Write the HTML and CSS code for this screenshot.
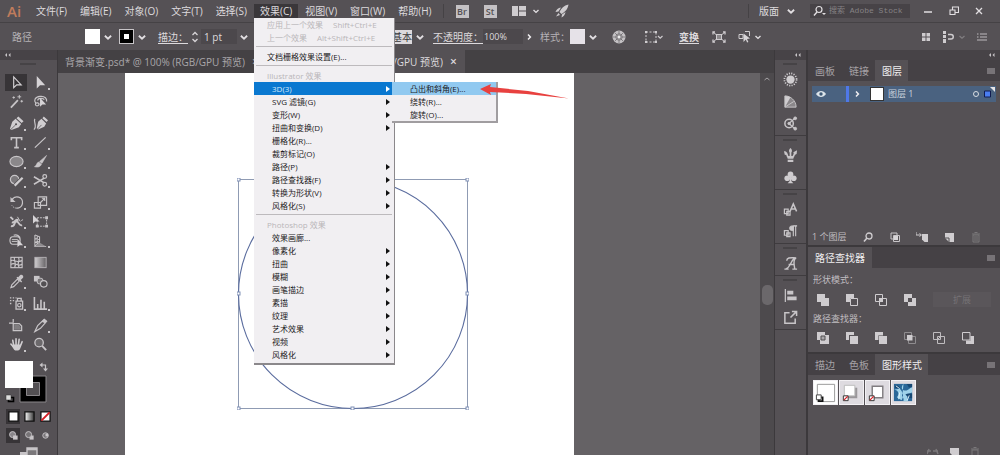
FILE: index.html
```html
<!DOCTYPE html>
<html lang="zh-CN">
<head>
<meta charset="utf-8">
<title>Illustrator</title>
<link rel="stylesheet" href="styles.css">
</head>
<body>
<svg class="defs" aria-hidden="true">
  <symbol id="chev" viewBox="0 0 8 8"><path d="M1.500 3l2.500 2.400L6.500 3" fill="none" stroke="#e2dfe2" stroke-width="1.400"/></symbol>
  <symbol id="chev-r" viewBox="0 0 8 8"><path d="M3 1.500L5.400 4 3 6.500" fill="none" stroke="#f0eef0" stroke-width="1.500"/></symbol>
  <symbol id="burger" viewBox="0 0 8 8"><path d="M0 2h8M0 4h8M0 6h8" stroke="#a9a6a9" stroke-width="1.200"/></symbol>
  <symbol id="dbl" viewBox="0 0 8 6"><path d="M3 1L1 3l2 2zM6.500 1l-2 2 2 2z" fill="#c8c5c8"/></symbol>
</svg>

<div class="app">
  <header class="menubar">
    <span class="logo">Ai</span>
    <nav class="menus">
      <button>文件(F)</button><button>编辑(E)</button><button>对象(O)</button><button>文字(T)</button><button>选择(S)</button>
      <div class="menu-host">
        <button class="open">效果(C)</button>
        <div class="dropdown" role="menu">
          <button class="head">应用上一个效果<kbd>Shift+Ctrl+E</kbd></button>
          <button class="head">上一个效果<kbd>Alt+Shift+Ctrl+E</kbd></button>
          <hr>
          <button class="flat">文档栅格效果设置(E)...</button>
          <hr>
          <button class="head">Illustrator 效果</button>
          <div class="sub-host">
            <button class="more active">3D(3)</button>
            <div class="submenu" role="menu">
              <button class="hot">凸出和斜角(E)...</button>
              <button>绕转(R)...</button>
              <button>旋转(O)...</button>
              <svg class="arrow" viewBox="0 0 90 16" aria-hidden="true"><path d="M0 5L11 0 10 3 48 7 89 14.500 46 10 10 8 11 11z" fill="#e8413f"/></svg>
            </div>
          </div>
          <button class="more">SVG 滤镜(G)</button>
          <button class="more">变形(W)</button>
          <button class="more">扭曲和变换(D)</button>
          <button>栅格化(R)...</button>
          <button>裁剪标记(O)</button>
          <button class="more">路径(P)</button>
          <button class="more">路径查找器(F)</button>
          <button class="more">转换为形状(V)</button>
          <button class="more">风格化(S)</button>
          <hr>
          <button class="head">Photoshop 效果</button>
          <button>效果画廊...</button>
          <button class="more">像素化</button>
          <button class="more">扭曲</button>
          <button class="more">模糊</button>
          <button class="more">画笔描边</button>
          <button class="more">素描</button>
          <button class="more">纹理</button>
          <button class="more">艺术效果</button>
          <button class="more">视频</button>
          <button class="more">风格化</button>
        </div>
      </div>
      <button>视图(V)</button><button>窗口(W)</button><button>帮助(H)</button>
    </nav>
    <div class="launch">
      <button class="badge">Br</button>
      <button class="badge">St</button>
      <button class="arrange" aria-label="排列文档"><svg width="14" height="10" viewBox="0 0 14 10"><path d="M0 0h6v10H0zM7 0h7v4.500H7zM7 5.500h7V10H7z" fill="#cfcccf"/></svg><svg width="8" height="8"><use href="#chev"/></svg></button>
      <button aria-label="GPU 性能"><svg width="14" height="14" viewBox="0 0 14 14" fill="#cfcccf"><path d="M13.500.5C9 1.500 6 4.500 4.500 8L6.500 10C10 8 13 5 13.500.5zM6 3.500C3 4 1.500 5.500.5 8l3-.5zM10.500 8C10 10.500 9 12.500 6.500 13.500l.5-3zM3.500 9L1 12.500 5 11z"/></svg></button>
    </div>
    <div class="winside">
      <button class="workspace">版面<svg width="10" height="10"><use href="#chev"/></svg></button>
      <label class="search"><svg width="14" height="12" viewBox="0 0 14 12"><circle cx="6" cy="4.500" r="3" fill="none" stroke="#e2dfe2" stroke-width="1.200"/><path d="M4 7L1 10.500" stroke="#e2dfe2" stroke-width="1.400"/><path d="M9 8h4l-2 2z" fill="#e2dfe2"/></svg><input type="text" aria-label="搜索" placeholder="搜索 Adobe Stock"></label>
      <div class="winbtns">
        <button aria-label="最小化"><svg width="10" height="10" viewBox="0 0 10 10"><path d="M1 6h8" stroke="#e2dfe2" stroke-width="1.500"/></svg></button>
        <button aria-label="还原"><svg width="10" height="10" viewBox="0 0 10 10" fill="none" stroke="#e2dfe2" stroke-width="1.100"><path d="M3.500 3.500V1h6v5.500H6.500M1 4h5v4.500H1z"/></svg></button>
        <button aria-label="关闭"><svg width="8" height="8" viewBox="0 0 8 8"><path d="M1 1l6 6M7 1L1 7" stroke="#e2dfe2" stroke-width="1.300"/></svg></button>
      </div>
    </div>
  </header>

  <div class="control">
    <span class="ctx">路径</span>
    <button class="sw" aria-label="填色"><i class="white"></i><svg width="10" height="10"><use href="#chev"/></svg></button>
    <button class="sw" aria-label="描边颜色"><i class="stroke"></i><svg width="10" height="10"><use href="#chev"/></svg></button>
    <label class="link" for="sw-w">描边：</label>
    <div class="field weight"><svg width="8" height="14" viewBox="0 0 8 14"><path d="M1.500 5L4 2.500 6.500 5M1.500 9L4 11.500 6.500 9" fill="none" stroke="#d8d5d8" stroke-width="1.300"/></svg><input id="sw-w" value="1 pt"><svg width="10" height="10"><use href="#chev"/></svg></div>
    <div class="brush"><select aria-label="画笔"><option>基本</option></select><svg width="10" height="10"><use href="#chev"/></svg></div>
    <label class="link" for="opa">不透明度：</label>
    <div class="field opacity"><input id="opa" value="100%"><svg width="8" height="8"><use href="#chev-r"/></svg></div>
    <span class="plain">样式：</span>
    <button class="sw" aria-label="样式"><i class="pale"></i><svg width="10" height="10"><use href="#chev"/></svg></button>
    <button class="wheel" aria-label="重新着色"><svg width="14" height="14" viewBox="0 0 14 14"><circle cx="7" cy="7" r="6.500" fill="#c4c1c4"/><g stroke="#5b575b"><path d="M7 1v12M1 7h12M2.800 2.800l8.400 8.400M11.200 2.800l-8.400 8.400" stroke-width=".6"/><circle cx="7" cy="7" r="3.200" fill="none" stroke-width=".6"/></g><circle cx="7" cy="7" r="1.200" fill="#eee"/></svg></button>
    <button aria-label="对齐" class="align"><svg width="20" height="14" viewBox="0 0 20 14"><rect x="2" y="2" width="10" height="10" fill="none" stroke="#cfcccf" stroke-dasharray="2 1.500"/><path d="M1 1h2v2H1zM11 1h2v2h-2zM1 11h2v2H1zM11 11h2v2h-2z" fill="#cfcccf"/><path d="M14 6l2.200 2.200L18.500 6" fill="none" stroke="#cfcccf" stroke-width="1.200"/></svg></button>
    <button class="link bold">变换</button>
    <button aria-label="隔离" class="iso"><svg width="14" height="12" viewBox="0 0 14 12" fill="none" stroke="#cfcccf"><rect x="4.500" y="3.500" width="5" height="5" fill="#8b888b"/><path d="M1 1l3 2.500M13 1l-3 2.500M1 11l3-2.500M13 11l-3-2.500"/><path d="M1 3.500V1h2M11 1h2v2.500M1 8.500V11h2M11 11h2V8.500" stroke-width="1.300"/></svg></button>
    <button aria-label="选择类似对象" class="similar"><svg width="13" height="13" viewBox="0 0 13 13"><path d="M1 4.500h4v4H1zM7 1.500h4.500V6" fill="none" stroke="#cfcccf"/><path d="M5.500 3.500l6.500 5-3 .4 1.400 3-1.300.6-1.300-3L5.500 12z" fill="#d8d5d8"/></svg><svg width="8" height="8"><use href="#chev"/></svg></button>
    <div class="ctl-right">
      <button aria-label="网格"><svg width="10" height="10" viewBox="0 0 10 10"><path d="M1 1h3.500v3.500H1zM5.500 1H9v3.500H5.500zM1 5.500h3.500V9H1zM5.500 5.500H9V9H5.500z" fill="#cfcccf"/></svg></button>
      <button aria-label="对齐像素"><svg width="24" height="12" viewBox="0 0 24 12"><path d="M1 0h3v3H1zM1 4h3v3H1zM1 8h3v4H1z" fill="#cfcccf"/><path d="M6 3.500h3a2 2 0 0 1 0 4.500H6" fill="none" stroke="#cfcccf" stroke-width="1.500"/><path d="M17.500 5l2.500 2.300L22.500 5" fill="none" stroke="#817e81" stroke-width="1.200"/></svg></button>
      <button aria-label="选项"><svg width="10" height="10" viewBox="0 0 10 10"><path d="M3 2h7M3 5h7M3 8h7M0 2h1.500M0 8h10M0 5h1.500" stroke="#bdbabd" stroke-width="1.100"/></svg></button>
    </div>
  </div>

  <main class="work">
    <aside class="tools">
      <div class="collapse left"><svg width="8" height="6"><use href="#dbl"/></svg></div>
      <div class="grip"></div>
      <div class="tg">
        <button class="on" aria-label="选择"><svg viewBox="0 0 16 16"><path d="M5 2v11.500l3.200-3H13z" fill="none" stroke="#d6d3d6" stroke-width="1.200"/></svg></button>
        <button class="m" aria-label="直接选择"><svg viewBox="0 0 16 16"><path d="M4 1v13.500L7.500 11H13z" fill="#d6d3d6"/></svg></button>
        <button aria-label="魔棒"><svg viewBox="0 0 16 16"><path d="M2 14.500L9.500 6.500" stroke="#c8c5c8" stroke-width="1.800"/><path d="M11 1v4M9 3h4M5 2.500v2.500M3.700 3.700h2.600M13.500 6.500V9M12.200 7.700H15" stroke="#c8c5c8"/></svg></button>
        <button aria-label="套索"><svg viewBox="0 0 16 16"><path d="M3 10C.5 7 2 3 7.500 2.500S15 5 14.500 8M3 10c-1 1.500 0 3 2 2.500s2-2.500 0-3-2 1-2 1M5 7c0-3 6-3 7-1" fill="none" stroke="#c8c5c8" stroke-width="1.300"/><path d="M7.500 4v9.500l2.500-2.300h4z" fill="#d6d3d6"/></svg></button>
      </div>
      <div class="tg">
        <button class="m" aria-label="钢笔"><svg viewBox="0 0 16 16"><path d="M10 .5L15.500 5.500 13.500 7.500 8 2.500zM7 3l6 5.500-2.500 3.500L2.500 15 1 13.500 3.500 6z" fill="#d0cdd0"/><path d="M2 14.300L7 9.500" stroke="#535053" stroke-width=".8"/><circle cx="7.500" cy="8.800" r="1.100" fill="#535053"/></svg></button>
        <button aria-label="曲率"><svg viewBox="0 0 16 16"><path d="M11.500.5L16 4.500l-1.500 2L10 2.500zM9 3l5 5-2 3.500L5.500 14.500l-1.500-1.500L5.500 6z" fill="#d0cdd0"/><path d="M5 13.800L9 9.500" stroke="#535053" stroke-width=".8"/><path d="M1 14.500C5 11 0 6 2 3" fill="none" stroke="#c8c5c8" stroke-width="1.300"/></svg></button>
        <button class="m" aria-label="文字"><svg viewBox="0 0 16 16"><path d="M2.500 5.500V3h11v2.500M8 3v10.500M5.500 13.500h5" fill="none" stroke="#c8c5c8" stroke-width="1.700"/></svg></button>
        <button class="m" aria-label="直线段"><svg viewBox="0 0 16 16"><path d="M2 13.500L13.500 2.500" stroke="#c8c5c8" stroke-width="1.300"/></svg></button>
        <button class="m" aria-label="椭圆"><svg viewBox="0 0 16 16"><ellipse cx="8" cy="8" rx="7" ry="5.500" fill="#8a878a" stroke="#c8c5c8" stroke-width="1.200"/></svg></button>
        <button class="m" aria-label="画笔工具"><svg viewBox="0 0 16 16"><path d="M14.500 1.500L9.500 10 7 8zM6.300 8.500l2.700 2.300C8 14 4.500 14.500 1.500 13.500 4 13 3.500 9 6.300 8.500z" fill="#c8c5c8" stroke="#c8c5c8" stroke-width=".6"/></svg></button>
        <button class="m" aria-label="Shaper"><svg viewBox="0 0 16 16"><circle cx="6" cy="7" r="4.500" fill="#7b787b" stroke="#c8c5c8" stroke-width="1.300"/><path d="M6 13.500L14.500 5" stroke="#535053" stroke-width="4"/><path d="M6 13.500L14.500 5" stroke="#d0cdd0" stroke-width="2.400"/></svg></button>
        <button class="m" aria-label="剪刀"><svg viewBox="0 0 16 16"><path d="M1 4l11 6.500M1 12l11-6.500" stroke="#c8c5c8" stroke-width="1.700"/><circle cx="12.500" cy="3.800" r="2" fill="none" stroke="#c8c5c8" stroke-width="1.300"/><circle cx="12.500" cy="12" r="2" fill="none" stroke="#c8c5c8" stroke-width="1.300"/></svg></button>
      </div>
      <div class="tg">
        <button class="m" aria-label="旋转"><svg viewBox="0 0 16 16"><path d="M3 5.500A6 6 0 1 1 8 14" fill="none" stroke="#c8c5c8" stroke-width="1.400"/><path d="M8 14A6 6 0 0 1 3 11" fill="none" stroke="#c8c5c8" stroke-dasharray="1.500 1"/><path d="M1.500 2v5.500H7z" fill="#c8c5c8"/></svg></button>
        <button class="m" aria-label="比例缩放"><svg viewBox="0 0 16 16" fill="none" stroke="#c8c5c8" stroke-width="1.200"><path d="M5.500 2h9v9h-9zM1.500 8h6.500v6H1.500z"/><path d="M8 8l4.500-4.500M9.500 3.500h3v3"/></svg></button>
        <button class="m" aria-label="宽度"><svg viewBox="0 0 16 16"><path d="M1.500 3l3 3M2 13c5 1 3-5 6-5s2 5 6 4M3 9c3 1 4-5 7-2" fill="none" stroke="#c8c5c8" stroke-width="2"/><path d="M9 3l3 5M13 7l2-1" stroke="#c8c5c8"/></svg></button>
        <button aria-label="自由变换"><svg viewBox="0 0 16 16"><rect x="4.500" y="4" width="10" height="9" fill="none" stroke="#c8c5c8" stroke-dasharray="2 1"/><path d="M13 2.500h3v3h-3zM13 11.500h3v3h-3zM3 11.500h3v3H3z" fill="#c8c5c8"/><path d="M0 1v9l2.500-2H7z" fill="#d6d3d6"/></svg></button>
        <button class="m" aria-label="形状生成器"><svg viewBox="0 0 16 16"><path d="M4 4h4.500C13 4 13 12 8.500 12H4C0 12 0 4 4 4zM5 2.500C8 1 12 3 12 7" fill="none" stroke="#c8c5c8" stroke-width="1.200"/><path d="M3 7h6M3 9h6" stroke="#c8c5c8"/><path d="M9 6v9l2.300-2H15z" fill="#d6d3d6"/></svg></button>
        <button class="m" aria-label="透视网格"><svg viewBox="0 0 16 16"><path d="M2 2v12.500h12M2 2l5 2v6l-5 4M2 6l5 1M2 10l5-1M4.500 3v9" fill="none" stroke="#c8c5c8" stroke-width="1.100"/><path d="M7 10l7 4.500H2z" fill="#8f8c8f"/></svg></button>
      </div>
      <div class="tg">
        <button aria-label="网格工具"><svg viewBox="0 0 16 16"><rect x="2" y="2.500" width="12" height="11" fill="none" stroke="#c8c5c8" stroke-width="1.200"/><path d="M2 6c4-2 4 3 12 0M2 10c5-3 6 3 12 0M6 2.500c-2 4 3 5 0 11M10 2.500c3 4-3 5 1 11" fill="none" stroke="#c8c5c8" stroke-width="1.200"/></svg></button>
        <button aria-label="渐变"><svg viewBox="0 0 16 16"><defs><linearGradient id="g1"><stop stop-color="#d0cdd0"/><stop offset="1" stop-color="#656265"/></linearGradient></defs><rect x="2" y="2.500" width="12" height="11" fill="url(#g1)" stroke="#b5b2b5"/></svg></button>
        <button class="m" aria-label="吸管"><svg viewBox="0 0 16 16"><path d="M2 14.500l1-3L9 5.500l2 2-6 6z" fill="none" stroke="#c8c5c8" stroke-width="1.200"/><path d="M8 4l5 5 1-1-1.500-1.500L15 4c1-2-1-4-3-3L9.800 3.500 9 3z" fill="#c8c5c8"/></svg></button>
        <button aria-label="混合"><svg viewBox="0 0 16 16"><path d="M1 2h6v6H1z" fill="#c8c5c8"/><rect x="4.500" y="4.500" width="6" height="6" rx="2" fill="#777477" stroke="#c8c5c8"/><circle cx="11.500" cy="10.500" r="3.500" fill="#535053" stroke="#c8c5c8" stroke-width="1.200"/></svg></button>
      </div>
      <div class="tg">
        <button class="m" aria-label="符号喷枪"><svg viewBox="0 0 16 16"><path d="M1 2h1.500M4 2h1.500M1 5h1.500M4 5h1.500M1 8h1.500M7 2h1" stroke="#c8c5c8" stroke-width="1.400"/><path d="M7.500 5.500h7v8.500h-7zM9 5.500V2.500h4v3" fill="none" stroke="#c8c5c8" stroke-width="1.400"/><circle cx="11" cy="9.800" r="1.800" fill="none" stroke="#c8c5c8" stroke-width="1.200"/></svg></button>
        <button class="m" aria-label="柱形图"><svg viewBox="0 0 16 16"><path d="M1.500 1v13H15M5 14V8.500M8.500 14V4M12 14V6" fill="none" stroke="#c8c5c8" stroke-width="1.700"/></svg></button>
      </div>
      <div class="tg">
        <button aria-label="画板工具"><svg viewBox="0 0 16 16"><path d="M0 5.500h4M4.500 1v4M4.500 6h6.500l2.500 2.500v5h-9z" fill="none" stroke="#c8c5c8" stroke-width="1.300"/><path d="M5.500 7h5l2 2.500v3h-7z" fill="#807d80"/></svg></button>
        <button class="m" aria-label="切片"><svg viewBox="0 0 16 16"><path d="M2 14.500L5 8l7-6.500 2.500 2L8 11z" fill="none" stroke="#c8c5c8" stroke-width="1.300"/><path d="M9 4l4 1.500L14.500 3 12 1z" fill="#c8c5c8"/></svg></button>
        <button class="m" aria-label="抓手"><svg viewBox="0 0 16 16"><path d="M5 9L4 3.500M7.500 8.500V1.800M10 8.500l.8-6M12 10l2-5M5 11L2 7.500" stroke="#d0cdd0" stroke-width="1.700" stroke-linecap="round"/><path d="M4.200 8h8.600c0 4-1.300 6.500-4.300 6.500S5 13 3.500 10z" fill="#d0cdd0"/></svg></button>
        <button aria-label="缩放"><svg viewBox="0 0 16 16"><circle cx="6.500" cy="6" r="4.500" fill="#6b686b" stroke="#c8c5c8" stroke-width="1.400"/><path d="M9.800 9.500L14 14" stroke="#c8c5c8" stroke-width="2"/></svg></button>
      </div>
      <div class="fillstroke">
        <svg width="46" height="42" viewBox="0 0 46 42"><path d="M15 15h26v26H15z" fill="#000" stroke="#8a878a"/><path d="M21.500 21.500h13v13h-13z" fill="#535053" stroke="#8a878a"/><path d="M0 0h28v27H0z" fill="#fff"/><path d="M37 4h3.500v5" fill="none" stroke="#c8c5c8" stroke-width="1.200"/><path d="M37.500 1.500v5L34.500 4zM38 7.500h5L40.500 10.500z" fill="#c8c5c8"/><path d="M3.500 36.500h5v4h-5z" fill="none" stroke="#000" stroke-width="1.600"/><path d="M1 34h5v5H1z" fill="#ddd" stroke="#333" stroke-width=".5"/></svg>
      </div>
      <div class="modes">
        <button class="on" aria-label="颜色"><svg viewBox="0 0 12 12"><path d="M1 1h10v10H1z" fill="#fff" stroke="#111" stroke-width="1.400"/></svg></button>
        <button aria-label="渐变填色"><svg viewBox="0 0 12 12"><defs><linearGradient id="g2"><stop stop-color="#fff"/><stop offset="1" stop-color="#333"/></linearGradient></defs><path d="M1 1h10v10H1z" fill="url(#g2)" stroke="#111" stroke-width="1.400"/></svg></button>
        <button aria-label="无"><svg viewBox="0 0 12 12"><path d="M1 1h10v10H1z" fill="#fff" stroke="#111" stroke-width="1.400"/><path d="M1.500 10.500l9-9" stroke="#d41f26" stroke-width="2.200"/></svg></button>
      </div>
      <div class="modes">
        <button class="on" aria-label="正常绘图"><svg viewBox="0 0 12 12"><circle cx="5" cy="5" r="3.300" fill="#89868a" stroke="#c8c5c8"/><path d="M5.500 6h5v4.500h-5z" fill="#c8c5c8"/></svg></button>
        <button aria-label="背面绘图"><svg viewBox="0 0 12 12"><path d="M6 6h4.500v4.500H6z" fill="#c8c5c8"/><circle cx="5" cy="5" r="3.300" fill="#777477" stroke="#c8c5c8"/></svg></button>
        <button aria-label="内部绘图"><svg viewBox="0 0 12 12"><circle cx="6" cy="6" r="3" fill="#777477" stroke="#c8c5c8"/><path d="M6 4h3v3H6z" fill="#c8c5c8"/></svg></button>
      </div>
      <button class="screen" aria-label="屏幕模式"><svg width="18" height="12" viewBox="0 0 18 12"><path d="M7 1h10v10H7zM7 2.500h10" fill="#7b787b" stroke="#c8c5c8" stroke-width="1.400"/><path d="M0 5h7v6H0z" fill="#c8c5c8"/></svg></button>
    </aside>

    <section class="doc">
      <div class="tabs">
        <button class="tab">背景渐变.psd* @ 100% (RGB/GPU 预览)<b>×</b></button>
        <button class="tab current">(RGB/GPU 预览)<b>×</b></button>
      </div>
      <div class="canvas">
        <div class="artboard">
          <svg class="shape" width="232" height="232" viewBox="0 0 232 232" fill="none">
            <rect x="1.500" y="1.500" width="229" height="229" stroke="#8f9bb3"/>
            <circle cx="116" cy="116" r="114.500" stroke="#5a6c9e" stroke-width="1.100"/>
            <g fill="#fff" stroke="#7f8fb5"><rect x="0" y="0" width="3" height="3"/><rect x="229" y="0" width="3" height="3"/><rect x="0" y="229" width="3" height="3"/><rect x="229" y="229" width="3" height="3"/><rect x="0" y="114" width="3" height="3"/><rect x="229" y="114" width="3" height="3"/><rect x="114" y="229" width="3" height="3"/></g>
          </svg>
        </div>
        <div class="scroll"><svg width="8" height="8" viewBox="0 0 8 8"><path d="M1.500 5L4 3l2.500 2" fill="none" stroke="#a5a2a5"/></svg><i></i></div>
      </div>
    </section>

    <aside class="strip">
      <div class="collapse"><svg width="8" height="6"><use href="#dbl"/></svg></div>
      <div class="sg">
        <button aria-label="颜色面板"><svg viewBox="0 0 16 16"><circle cx="8" cy="8" r="4.400" fill="#d0cdd0"/><circle cx="8" cy="8" r="6.500" fill="none" stroke="#d0cdd0" stroke-width="1.800" stroke-dasharray="1.200 1.352"/></svg></button>
        <button aria-label="颜色参考"><svg viewBox="0 0 16 16"><path d="M2 2c6 0 12 5 12 12H2z" fill="#8a878a"/><path d="M2 2v12L8 3.500C6 2.500 4 2 2 2z" fill="#d0cdd0"/><path d="M2 2c6 0 12 5 12 12H2zM2 14l9.500-6" fill="none" stroke="#c8c5c8"/></svg></button>
        <button aria-label="颜色主题"><svg viewBox="0 0 16 16" fill="none" stroke="#c8c5c8"><circle cx="6.500" cy="8" r="4.500" stroke-width="1.600"/><path d="M6.500 8l6.500-6M6.500 8l6.500 6" stroke-width="1.300"/><g fill="#c8c5c8"><circle cx="6.500" cy="8" r="1.300"/><circle cx="13" cy="2.500" r="1.500"/><circle cx="13" cy="13.500" r="1.500"/></g></svg></button>
      </div>
      <div class="sg">
        <button aria-label="画笔面板"><svg viewBox="0 0 16 16"><path d="M5 9L3.500 5M8 9V3M11 9l2-4" stroke="#c8c5c8" stroke-width="1.800"/><path d="M1 3.500c2.500-.5 3.500 1 3.500 3.500l-2.500.5zM8 0c2.300 2 1.800 4.500 0 5-1.800-.5-2.300-3 0-5zM15 2.500l-4 2 1 3 2.500-1zM4 8.500h8l-1 3H5zM5 12.500h6V15H5z" fill="#c8c5c8"/></svg></button>
        <button aria-label="符号"><svg viewBox="0 0 16 16" fill="#d0cdd0"><circle cx="8" cy="4.500" r="3"/><circle cx="4.500" cy="8.800" r="3"/><circle cx="11.500" cy="8.800" r="3"/><path d="M7.300 6h1.400L9 12l2 2H5l2-2z"/></svg></button>
      </div>
      <div class="sg">
        <button aria-label="字符样式"><svg viewBox="0 0 16 16" fill="none" stroke="#c8c5c8"><path d="M7.500 10L11 2l3.500 8M8.500 7.500h5" stroke-width="1.600"/><path d="M1.500 7.500h4v5h-4zM4 10h3.500v4H4z" stroke-width="1.300"/></svg></button>
        <button aria-label="段落样式"><svg viewBox="0 0 16 16" fill="none" stroke="#c8c5c8"><path d="M15 2H9.500a2.500 2.500 0 0 0 0 5H11V2z" fill="#c8c5c8"/><path d="M11 2v11M13.500 2v11" stroke-width="1.200"/><path d="M1.500 7h4v5h-4zM4 9.500h3.500v4H4z" stroke-width="1.300"/></svg></button>
      </div>
      <div class="sg">
        <button aria-label="字形"><svg viewBox="0 0 16 16" fill="none" stroke="#c8c5c8"><path d="M4 5C4 1 9 2 14 2c-4 2-2 7-1.500 11.500M12 2.500C8 6 7 13.500 3 13.500M6 9h6.500M1.500 14H6M10 14h5" stroke-width="1.500"/></svg></button>
      </div>
      <div class="sg">
        <button aria-label="对齐面板"><svg viewBox="0 0 16 16"><path d="M2.500 1v14" stroke="#c8c5c8" stroke-width="1.300"/><path d="M4.500 3H11v4H4.500zM4.500 9h10v4h-10z" fill="#c8c5c8"/></svg></button>
        <button aria-label="资源导出"><svg viewBox="0 0 16 16" fill="none" stroke="#c8c5c8" stroke-width="1.600"><path d="M7 3H2v11h11V9"/><path d="M8 8l6-6M9.500 1.500h5v5"/></svg></button>
      </div>
    </aside>

    <aside class="panels">
      <div class="collapse"><svg width="8" height="6"><use href="#dbl"/></svg></div>
      <section class="panel">
        <div class="ptabs"><button>画板</button><button>链接</button><button class="sel">图层</button><svg width="8" height="8"><use href="#burger"/></svg></div>
        <div class="pbody layers">
          <div class="layer">
            <button class="eye" aria-label="切换可视性"><svg width="10" height="8" viewBox="0 0 10 8"><path d="M0 4c2.500-4 7.500-4 10 0-2.500 4-7.500 4-10 0z" fill="#dce4ea"/><circle cx="5" cy="4" r="1.700" fill="#3f5a77"/></svg></button>
            <i class="tint"></i>
            <button aria-label="展开" class="exp"><svg width="8" height="8"><use href="#chev-r"/></svg></button>
            <i class="thumb"></i>
            <span>图层 1</span>
            <svg class="target" width="26" height="16" viewBox="0 0 26 16"><circle cx="6" cy="8" r="2.500" fill="none" stroke="#d8dde2"/><path d="M14.500 5h6v6h-6z" fill="#4a7df0" stroke="#101c50"/><path d="M20 1h5v5z" fill="#e8e6e8"/></svg>
          </div>
          <div class="lfoot">
            <span>1 个图层</span>
            <button aria-label="定位对象"><svg viewBox="0 0 12 12"><circle cx="7" cy="5" r="3" fill="none" stroke="#d0cdd0" stroke-width="1.300"/><path d="M5 7L2 10.500" stroke="#d0cdd0" stroke-width="1.600"/></svg></button>
            <button aria-label="剪切蒙版"><svg viewBox="0 0 12 12"><path d="M2 2h6v6H2zM4.500 4.500h6v6h-6z" fill="none" stroke="#c8c5c8"/><path d="M5 5h4v4H5z" fill="#d8d5d8"/></svg></button>
            <button aria-label="新建子图层"><svg viewBox="0 0 12 12"><path d="M0 1v3h5M3.500 2.500L5.500 4 3.500 5.500" fill="none" stroke="#d0cdd0"/><path d="M6 3h6v8H8.500L6 8.500z" fill="#d0cdd0"/></svg></button>
            <button aria-label="新建图层"><svg viewBox="0 0 12 12"><path d="M2 2h9v9H6L2 7z" fill="#d0cdd0"/><path d="M2 7h4v4" fill="none" stroke="#535053"/></svg></button>
            <button aria-label="删除" class="dim"><svg viewBox="0 0 12 12"><path d="M2 3h8M4.500 1.500h3M3 4h6v7H3zM5 5v5M7 5v5" fill="none" stroke="#7b787b"/></svg></button>
          </div>
        </div>
      </section>
      <section class="panel">
        <div class="ptabs"><button class="sel">路径查找器</button><svg width="8" height="8"><use href="#burger"/></svg></div>
        <div class="pbody finder">
          <span>形状模式：</span>
          <div class="prow">
            <button aria-label="联集"><svg viewBox="0 0 12 12"><path d="M0 0h8v4h4v8H4V8H0z" fill="#cfcccf"/></svg></button>
            <button aria-label="减去顶层"><svg viewBox="0 0 12 12"><path d="M0 0h8v4H4v4H0z" fill="#cfcccf"/><path d="M4.500 4.500h7v7h-7z" fill="none" stroke="#cfcccf"/></svg></button>
            <button aria-label="交集"><svg viewBox="0 0 12 12"><path d="M.5.5h7v7h-7zM4.500 4.500h7v7h-7z" fill="none" stroke="#cfcccf"/><path d="M4 4h4v4H4z" fill="#cfcccf"/></svg></button>
            <button aria-label="差集"><svg viewBox="0 0 12 12"><path d="M0 0h8v4h4v8H4V8H0zM4 4v4h4V4z" fill="#cfcccf" fill-rule="evenodd"/></svg></button>
            <button class="expand" disabled>扩展</button>
          </div>
          <span>路径查找器：</span>
          <div class="prow">
            <button aria-label="分割"><svg viewBox="0 0 12 12"><path d="M0 0h8v3h4v9H3V8H0z" fill="#cfcccf"/><path d="M4 8V4h4v4z" fill="#a9a6a9" stroke="#535053"/></svg></button>
            <button aria-label="修边"><svg viewBox="0 0 12 12"><path d="M0 0h8v3H3v5H0zM4 4h8v8H4z" fill="#cfcccf"/></svg></button>
            <button aria-label="合并"><svg viewBox="0 0 12 12"><path d="M0 0h8v4h4v8H4V8H0z" fill="#cfcccf"/><path d="M3.500 8V3.500H8" fill="none" stroke="#8a878a"/></svg></button>
            <button aria-label="裁剪"><svg viewBox="0 0 12 12"><path d="M.5.500h7v7h-7zM4.500 4.500h7v7h-7z" fill="none" stroke="#8f8c8f"/><path d="M3 3h5.500v5.500H3z" fill="#cfcccf"/></svg></button>
            <button aria-label="轮廓"><svg viewBox="0 0 12 12"><path d="M.5.500h7v7h-7zM4.500 4.500h7v7h-7zM4 8l4-4" fill="none" stroke="#bfbcbf"/></svg></button>
            <button aria-label="减去后方对象"><svg viewBox="0 0 12 12"><path d="M.5.500h7.500v7.500H.500z" fill="none" stroke="#cfcccf"/><path d="M8.500 4H12v8H4V8.500h4.500z" fill="#cfcccf"/></svg></button>
          </div>
        </div>
      </section>
      <section class="panel grow">
        <div class="ptabs"><button>描边</button><button>色板</button><button class="sel">图形样式</button><svg width="8" height="8"><use href="#burger"/></svg></div>
        <div class="pbody styles">
          <div class="swatches">
            <button class="first" aria-label="默认样式"><svg viewBox="0 0 24 24"><path d="M3.500 3.500h18v18h-18z" fill="#fff" stroke="#999"/><path d="M5 17h4v4H5z" fill="none" stroke="#111" stroke-width="1.800"/><path d="M2.500 14.500h5v5h-5z" fill="#fff" stroke="#444"/></svg></button>
            <button aria-label="投影"><svg viewBox="0 0 24 24"><path d="M7 7h11v11H7z" fill="#9a979a"/><path d="M4.500 4.500h11v11h-11z" fill="#fff" stroke="#bbb"/><path d="M3.500 15.500h5v5h-5z" fill="#fff" stroke="#333"/><path d="M4 20l4-4" stroke="#d41f26" stroke-width="1.300"/></svg></button>
            <button aria-label="圆角"><svg viewBox="0 0 24 24"><path d="M6.500 5.500h11v12h-11z" fill="#fff" stroke="#807d80" stroke-width="1.500"/><path d="M3.500 15.500h5v5h-5z" fill="#fff" stroke="#333"/><path d="M4 20l4-4" stroke="#d41f26" stroke-width="1.300"/></svg></button>
            <button aria-label="蓝色图案"><svg viewBox="0 0 24 24"><path d="M2 3h19v18H2z" fill="#2a6798"/><path d="M2 9c5 0 6 5 3 8l5 3c3-5 1-9-2-12zM12 3c-3 3-2 7 2 7s5-4 7-3v5c-5 1-6 5-4 9h-5c1-5-3-4-1-8" fill="#9fd3ea"/><path d="M15 3c3 2 1 5 6 3V3zM14 14c4-2 5 0 7-1v5c-3 0-5-2-7-4zM3 4c2 1 5 0 5 4L3 7z" fill="#174873"/><path d="M4 5l4 3M8 12l-1 7M18 15l-2 5" stroke="#e4f5fb"/></svg></button>
          </div>
          <div class="sfoot">
            <svg viewBox="0 0 12 12"><path d="M0 5h4M6 5h5M2 3l-2 5M9 3l2 5" stroke="#7b787b" fill="none" stroke-width="1.500"/></svg>
            <svg viewBox="0 0 12 12"><path d="M2 2h9v9H6L2 7z" fill="#d0cdd0"/></svg>
            <svg viewBox="0 0 12 12"><path d="M2 3h8M4.500 1.500h3M3 4h6v7H3z" fill="none" stroke="#7b787b"/></svg>
          </div>
        </div>
      </section>
    </aside>
  </main>
</div>
</body>
</html>
```
FILE: styles.css
```css
* { box-sizing: border-box; }
body {
  margin: 0;
  overflow: hidden;
  background: #535053;
  color: #dddadd;
  font: 10px/14px "Open Sans", "Noto Sans CJK SC", sans-serif;
}
button, input, select {
  margin: 0;
  padding: 0;
  border: 0;
  background: none;
  color: inherit;
  font: inherit;
  white-space: nowrap;
}
button { display: flex; align-items: center; justify-content: center; }
svg { display: block; flex: none; }
.defs { position: absolute; width: 0; height: 0; }
.app { display: flex; flex-direction: column; height: 100vh; }

/* menu bar */
.menubar {
  display: flex;
  align-items: center;
  height: 23px;
  flex: none;
  background: #555155;
  border-bottom: 1px solid #454245;
}
.logo { width: 30px; padding-left: 7px; color: #c07c5c; font-size: 15px; font-weight: 600; }
.menus { display: flex; align-items: center; }
.menus > button, .open { height: 14px; padding: 0 6px; }
.menus > button:not(:last-child), .menu-host { margin-right: 1px; }
.menu-host { position: relative; z-index: 5; }
.open { background: #3a373a; }
.dropdown {
  position: absolute;
  top: 14px;
  left: 0;
  width: 141px;
  padding-bottom: 2px;
  background: #f1eff2;
  border-right: 1px solid #8b888b;
  border-bottom: 2px solid #8b888b;
  color: #1c1a1c;
  font-size: 8px;
  line-height: 13px;
}
.dropdown button { width: 100%; height: 13px; padding-left: 18px; justify-content: flex-start; }
.dropdown .head { padding-left: 13px; color: #b9b6b9; }
.dropdown .flat { padding-left: 13px; }
.dropdown kbd { margin-left: 10px; font: inherit; }
.dropdown hr { height: 1px; margin: 2px 2px 3px; border: 0; background: #bdbabd; }
.dropdown .more::after {
  content: "";
  margin: 0 4px 0 auto;
  border: 3px solid transparent;
  border-left: 4px solid #111;
  border-right: 0;
}
.dropdown .active { background: #0a78d0; color: #d5e9fb; }
.dropdown .active::after { border-left-color: #fff; }
.sub-host { position: relative; }
.submenu {
  position: absolute;
  top: 0;
  left: 138px;
  width: 106px;
  background: #f1eff2;
  border-right: 2px solid #a09da0;
  border-bottom: 2px solid #a09da0;
}
.submenu .hot { background: #91c9f0; }
.arrow { position: absolute; top: 2px; left: 88px; width: 90px; height: 16px; }
.launch { display: flex; align-items: center; gap: 15px; margin-left: 5px; padding-left: 12px; border-left: 1px solid #454245; }
.badge { width: 13px; height: 13px; background: #c4c1c4; color: #555155; font-size: 9px; font-weight: 600; line-height: 13px; }
.arrange { gap: 6px; }
.winside { display: flex; align-items: center; margin-left: auto; }
.workspace { gap: 7px; width: 62px; padding-left: 10px; border-left: 1px solid #454245; justify-content: flex-start; }
.search { display: flex; align-items: center; width: 100px; height: 14px; padding-left: 3px; background: #474347; }
.search input { width: 81px; margin-left: 2px; font: 8px/12px "Liberation Mono", "Noto Sans CJK SC", monospace; outline: 0; }
.search input::placeholder { color: #858285; opacity: 1; }
.winbtns { display: flex; width: 90px; padding: 0 17px 0 13px; justify-content: space-between; align-items: center; }

/* control bar */
.control {
  display: flex;
  align-items: center;
  height: 27px;
  flex: none;
  background: #555155;
  white-space: nowrap;
}
.ctx { width: 85px; padding-left: 12px; color: #b5b2b5; }
.control .sw { gap: 3px; width: 34px; justify-content: flex-start; }
.sw i { width: 15px; height: 15px; }
.white { background: #fff; }
.pale { background: #e6e2e8; }
.stroke { border: 1px solid #c8c5c8; background: #fff; box-shadow: inset 0 0 0 4px #000; }
.link { text-decoration: underline; text-underline-offset: 2px; text-decoration-thickness: 1px; }
.control > label { margin-left: 5px; }
.field { display: flex; align-items: center; height: 16px; }
.field input { height: 15px; background: #4c484c; padding-left: 3px; outline: 0; }
.weight { width: 60px; margin-left: 3px; gap: 2px; }
.weight input { width: 36px; }
.brush { display: flex; align-items: center; gap: 3px; width: 40px; margin-left: 137px; }
.brush select { width: 24px; height: 14px; appearance: none; background: #dcd9dc; color: #3a373a; text-align: right; }
.opacity { width: 57px; gap: 2px; font-size: 9px; }
.opacity input { width: 40px; padding-left: 1px; }
.plain { width: 30px; color: #b5b2b5; }
.wheel { margin-left: 8px; }
.align { margin-left: 18px; }
.bold { margin-left: 15px; font-weight: 600; }
.iso { margin-left: 13px; }
.similar { margin-left: 12px; gap: 3px; }
.ctl-right { display: flex; gap: 11px; margin-left: auto; padding-right: 13px; }

/* work area */
.work { display: flex; flex: 1; min-height: 0; overflow: hidden; background: #3c393c; }
.collapse { display: flex; align-items: center; justify-content: flex-end; height: 10px; flex: none; padding-right: 4px; background: #474347; }
.collapse.left { justify-content: flex-start; padding-left: 4px; }
.tools { width: 57px; flex: none; background: #555155; }
.grip { width: 16px; height: 2px; margin: 3px auto 8px 20px; background: #464346; }
.tg { display: grid; grid-template-columns: 24px 24px; margin: 0 0 3px 4px; }
.tg button { position: relative; height: 19px; }
.tg svg { width: 15px; height: 15px; }
.tg .on { width: 22px; height: 17px; margin: 1px; background: #373437; }
.tg .m::after { content: ""; position: absolute; right: 2px; bottom: 2px; width: 2px; height: 2px; background: #c8c5c8; }
.fillstroke { margin: 7px 0 6px 5px; }
.modes { display: flex; gap: 2px; margin: 0 0 4px 6px; }
.modes button { width: 14px; height: 15px; }
.modes .on { background: #373437; }
.modes svg { width: 11px; height: 11px; }
.screen { margin: 3px 0 0 20px; }

.doc { display: flex; flex-direction: column; flex: 1; min-width: 0; margin-left: 1px; }
.tabs { display: flex; height: 23px; flex: none; background: #444144; }
.tab { gap: 7px; padding: 0 8px 0 7px; justify-content: flex-end; color: #a9a6a9; }
.tab b { font-size: 12px; font-weight: 600; }
.tab.current { width: 198px; background: #555155; color: #dddadd; }
.canvas { display: flex; flex: 1; background: #656265; }
.artboard { position: relative; width: 449px; margin-left: 67px; background: #fff; }
.shape { position: absolute; left: 112px; top: 105px; }
.scroll { display: flex; flex-direction: column; align-items: center; width: 14px; margin-left: auto; padding-top: 2px; background: #4d4a4d; }
.scroll i { width: 11px; height: 20px; margin-top: 202px; border-radius: 5px; background: #6b686b; }

/* icon strip */
.strip { width: 31px; flex: none; margin-left: 1px; background: #555155; }
.sg { display: flex; flex-direction: column; align-items: center; padding: 8px 0 1px; border-bottom: 1px solid #3f3c3f; background: linear-gradient(#464346, #464346) 8px 3px / 14px 2px no-repeat; }
.sg button { height: 22px; }
.sg svg { width: 15px; height: 15px; }

/* panels */
.panels { display: flex; flex-direction: column; width: 192px; flex: none; margin-left: 2px; }
.panel { margin-bottom: 2px; }
.grow { display: flex; flex-direction: column; flex: 1; margin: 0; }
.ptabs { display: flex; align-items: center; height: 21px; flex: none; padding-right: 5px; background: #454145; }
.ptabs button { height: 21px; padding: 0 7px; color: #a5a2a5; }
.ptabs button + button { padding: 0 6px 0 7px; }
.ptabs .sel { background: #555155; color: #f0eef0; }
.ptabs svg { margin-left: auto; }
.pbody { background: #555155; color: #c0bdc0; font-size: 9px; }
.layers { padding: 5px 4px 0; }
.layer { display: flex; align-items: center; height: 16px; background: #4a6280; color: #c9d2dc; }
.eye { width: 18px; }
.tint { width: 3px; height: 16px; margin-left: 16px; background: #4f78e8; }
.exp { width: 16px; }
.thumb { width: 14px; height: 14px; margin: 0 4px 0 5px; border: 1px solid #333; background: #fff; }
.target { margin-left: auto; }
.lfoot { display: flex; align-items: center; height: 17px; margin-top: 126px; padding-right: 14px; gap: 15px; }
.lfoot span { margin-right: auto; white-space: nowrap; }
.lfoot svg { width: 12px; height: 12px; }
.finder { padding: 5px 5px 6px; }
.finder > span { display: block; }
.prow { display: flex; align-items: center; height: 17px; margin: 4px 0; padding-left: 4px; gap: 17px; }
.prow:last-child { margin: 3px 0 0; }
.prow svg { width: 12px; height: 12px; }
.prow .expand { width: 58px; height: 15px; background: #5a565a; color: #757275; }
.styles { display: flex; flex-direction: column; flex: 1; padding: 5px; }
.swatches { display: flex; gap: 1px; }
.swatches button { width: 25px; height: 25px; background: #dedbe0; border: 1px solid #f3f1f4; }
.swatches .first { background: #fff; }
.swatches svg { width: 23px; height: 23px; }
.sfoot { display: flex; justify-content: flex-end; gap: 9px; margin-top: 41px; padding-right: 14px; }
.sfoot svg { width: 12px; height: 12px; }
```
